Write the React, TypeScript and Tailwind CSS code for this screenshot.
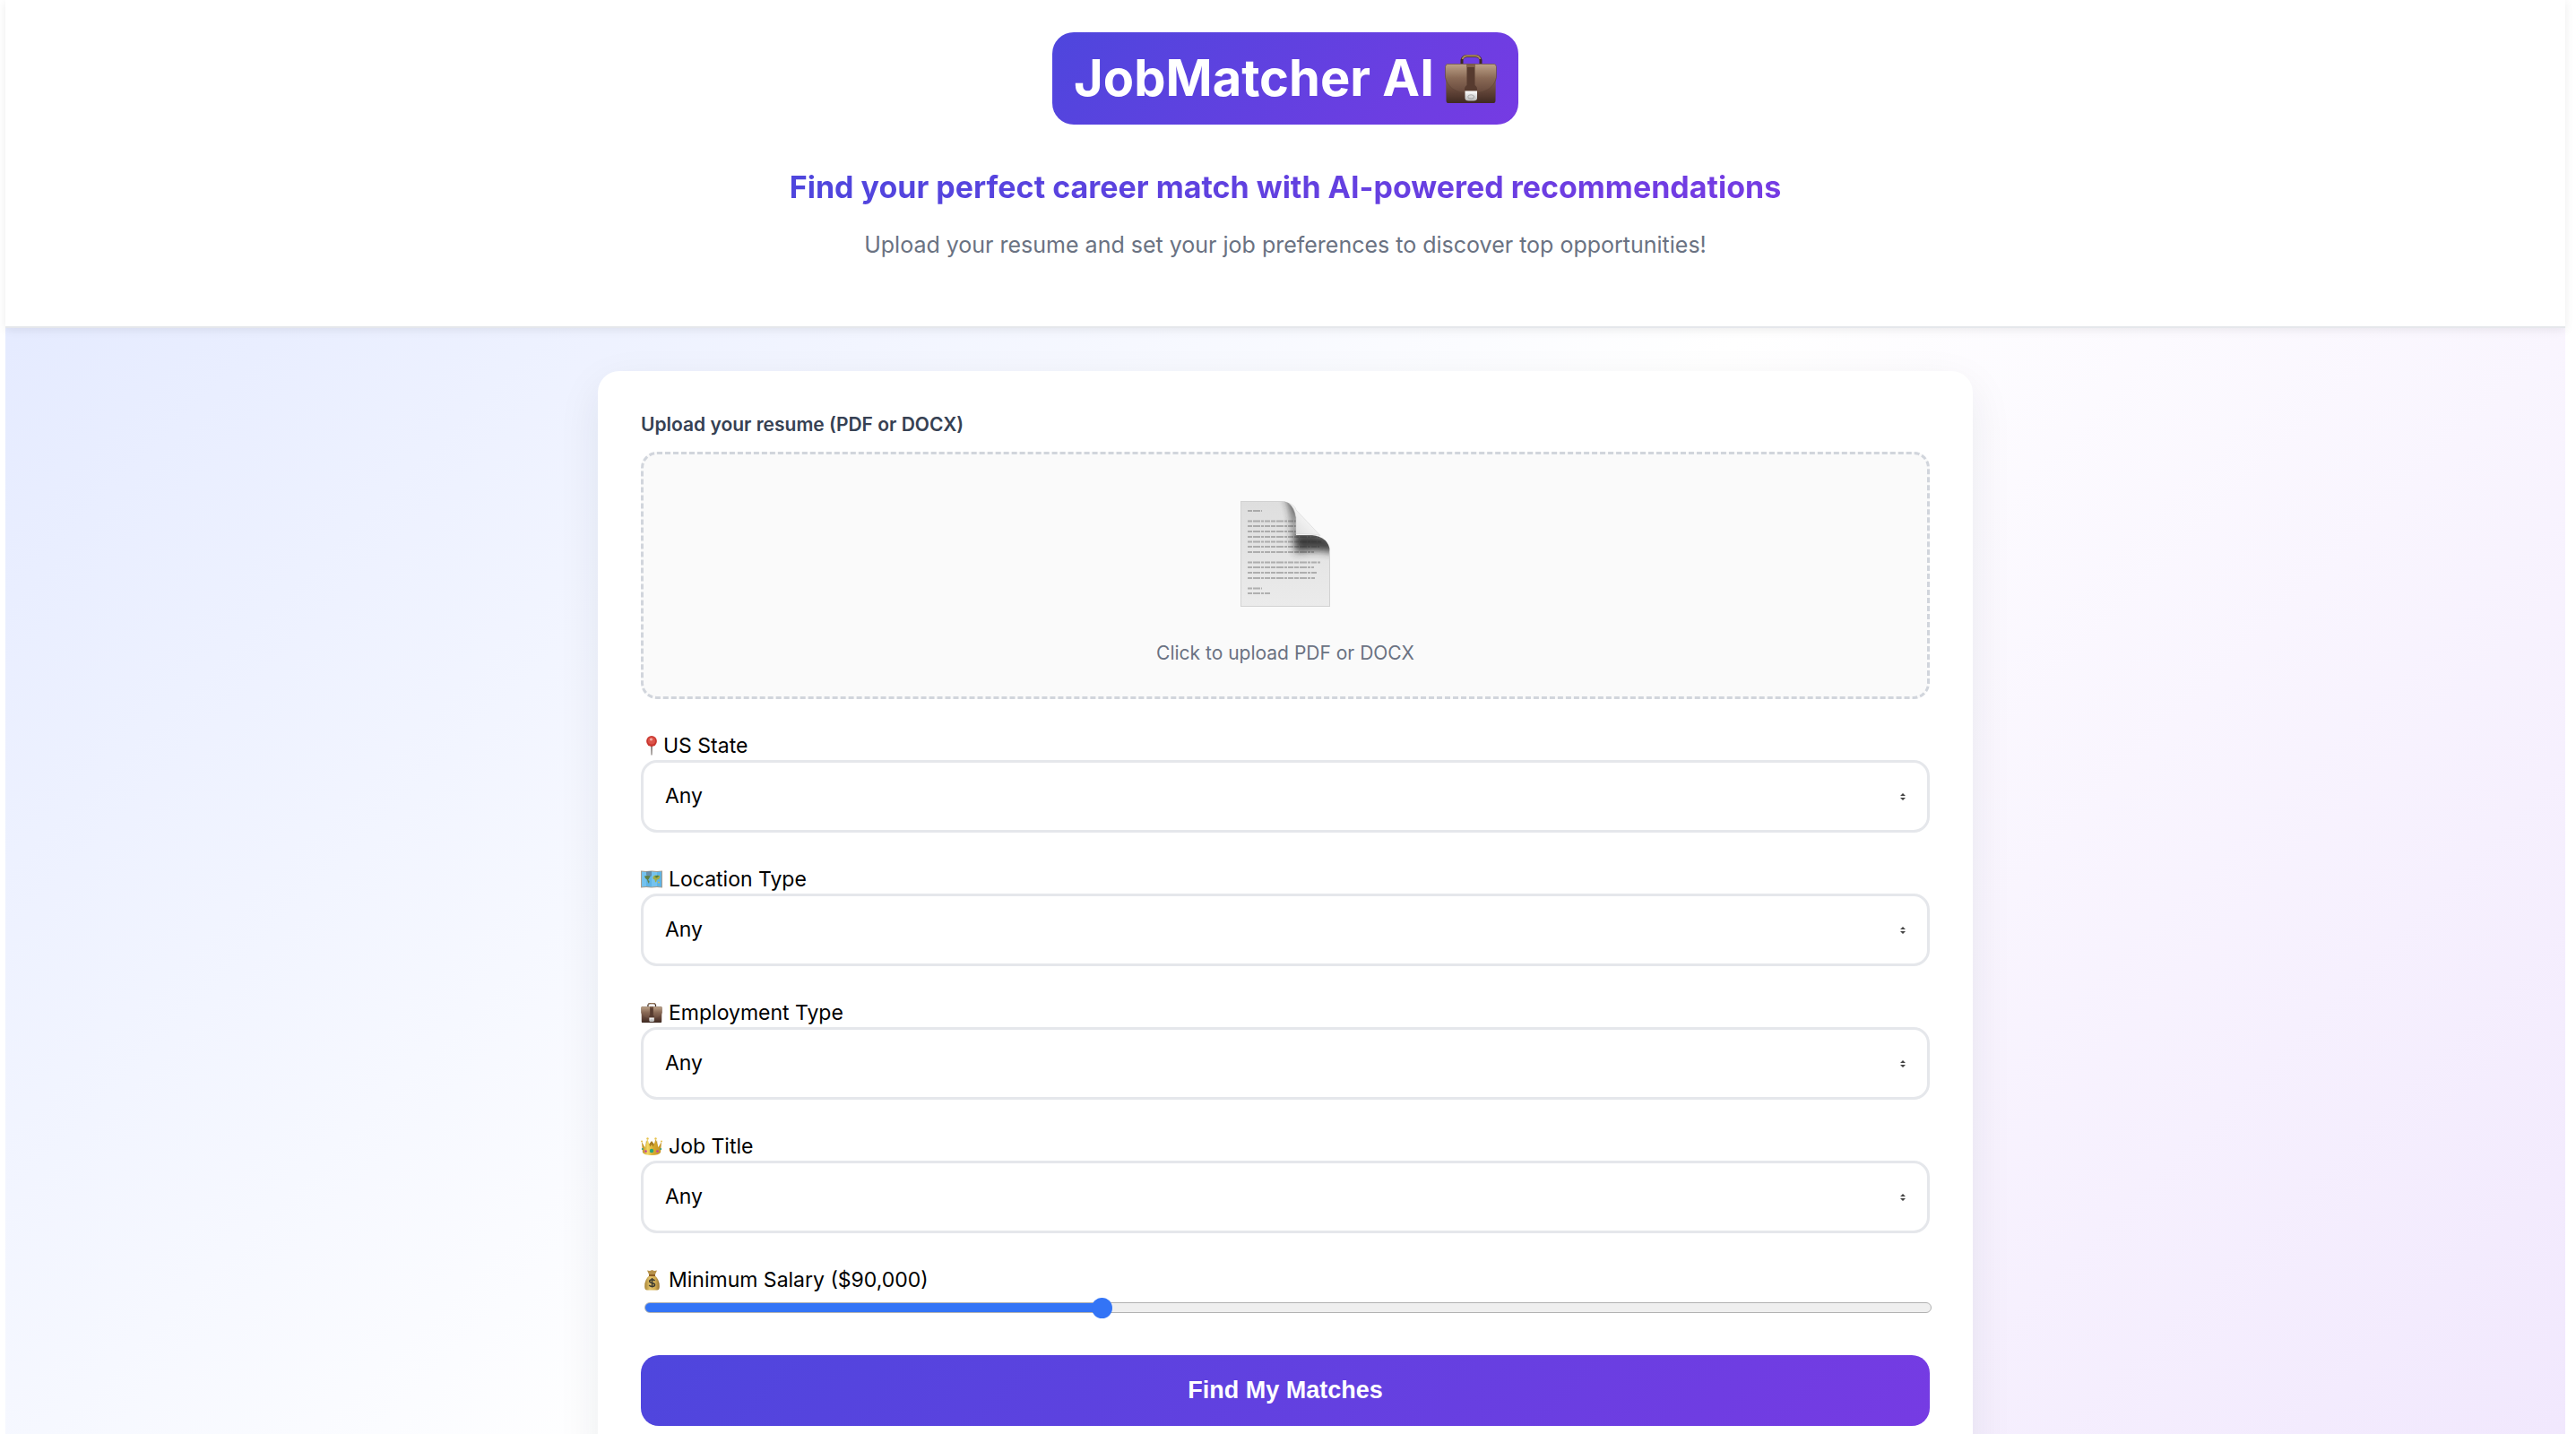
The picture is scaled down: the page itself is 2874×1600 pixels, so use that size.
import { useState, type ReactNode } from "react";

function Briefcase({ className, id }: { className: string; id: string }) {
  return (
    <svg viewBox="0 0 58 54" className={className} aria-hidden="true">
      <defs>
        <linearGradient id={`${id}-body`} x1="0" y1="0" x2="0" y2="1">
          <stop offset="0" stopColor="#b89c82" />
          <stop offset="0.3" stopColor="#8b6c56" />
          <stop offset="0.65" stopColor="#67483b" />
          <stop offset="1" stopColor="#3f2a22" />
        </linearGradient>
        <linearGradient id={`${id}-flap`} x1="0" y1="0" x2="0" y2="1">
          <stop offset="0" stopColor="#bda288" />
          <stop offset="0.5" stopColor="#896955" />
          <stop offset="1" stopColor="#684a3d" />
        </linearGradient>
        <linearGradient id={`${id}-lock`} x1="0" y1="0" x2="0" y2="1">
          <stop offset="0" stopColor="#ffffff" />
          <stop offset="1" stopColor="#b9b9b9" />
        </linearGradient>
      </defs>
      <path d="M19 10V6Q20 1.500 25 1.500h9Q39 1.500 40 6v4" fill="none" stroke="#3d2a22" strokeWidth="3" />
      <path d="M19.500 5Q21 1.200 25 1.200h9Q38 1.200 39.500 5" fill="none" stroke="#a98662" strokeWidth="2" />
      <path d="M3 10.500h52q2 0 2 2L56.500 51q0 3-2 3h-51q-2 0-2-3L1 12.500q0-2 2-2z" fill={`url(#${id}-body)`} />
      <path d="M3 10.500h52q2 0 2.500 3v12C55 37 45 42 36 42H22C13 42 3 37 .500 25.500v-12q.500-3 2.500-3z" fill={`url(#${id}-flap)`} stroke="#5d4336" strokeWidth=".6" />
      <path d="M24.500 10.500h9V34q3 2 2.500 6H22q-.500-4 2.500-6z" fill="#573b2f" />
      <path d="M24.500 10.500h9V14h-9z" fill="#80604b" />
      <path d="M22.500 40.500h13.500v8q0 3-4 3h-5.500q-4 0-4-3z" fill={`url(#${id}-lock)`} />
      <ellipse cx="29.200" cy="47" rx="3.500" ry="2.200" fill="none" stroke="#999" strokeWidth=".8" />
    </svg>
  );
}

function Page() {
  const lines = [
    [11, 24],
    [22.5, 66],
    [28, 64],
    [34, 62],
    [40, 88],
    [45.5, 90],
    [51, 88],
    [57, 82],
    [68.5, 89],
    [74, 82],
    [80, 86],
    [86, 83],
    [97.5, 24],
    [103, 34],
  ];
  return (
    <svg viewBox="0 0 100 118" className="h-[118px] w-[100px]" aria-hidden="true">
      <defs>
        <linearGradient id="page-body" x1="0" y1="0" x2="0" y2="1">
          <stop offset="0" stopColor="#dedede" />
          <stop offset="1" stopColor="#ebebeb" />
        </linearGradient>
        <linearGradient id="page-curl" x1="0" y1="1" x2="0.5" y2="0.5">
          <stop offset="0" stopColor="#dadada" />
          <stop offset="1" stopColor="#f1f1f1" />
        </linearGradient>
        <filter id="page-blur" x="-50%" y="-50%" width="200%" height="200%">
          <feGaussianBlur stdDeviation="5" />
        </filter>
        <clipPath id="page-clip">
          <path d="M0 0h46Q60 1 62 18v20h18Q98 40 100 56v62H0z" />
        </clipPath>
      </defs>
      <g clipPath="url(#page-clip)">
        <path d="M0 0h100v118H0z" fill="url(#page-body)" />
        <g stroke="#777" strokeWidth="1.8" strokeDasharray="5 1 8 1 3 1 6 1" opacity=".5">
          {lines.map(([y, end]) => (
            <path key={y} d={`M8 ${y}H${end}`} />
          ))}
        </g>
        <path d="M50-6Q59 8 59 38l3 20q18-6 44 0V46Q94 34 62 35L66-6z" fill="#2b2b2b" opacity=".9" filter="url(#page-blur)" />
        <path d="M0 0h100v118H0z" fill="none" stroke="#d2d2d2" strokeWidth="2" />
      </g>
      <path d="M54 2.500Q61 5 62 10L89 38.500Q84 36.500 62 37V18Q60 7 54 2.500z" fill="url(#page-curl)" stroke="#cfcfcf" strokeWidth=".5" />
    </svg>
  );
}

function Pin() {
  return (
    <svg viewBox="0 0 12 22" className="ml-1.5 mr-[7px] h-[22px] w-3" aria-hidden="true">
      <path d="M5 11h2l-.4 10.500h-1.200z" fill="#8d8582" />
      <circle cx="6" cy="6" r="5.900" fill="#c9372f" />
      <circle cx="6" cy="5.500" r="4" fill="#dc5349" />
      <circle cx="5.500" cy="4" r="1.600" fill="#f4aaa3" />
    </svg>
  );
}

function WorldMap() {
  return (
    <svg viewBox="0 0 24 20" className="mr-[7px] h-5 w-6" aria-hidden="true">
      <path d="M0 .5 6 1l6-.5L18 1l6-.5V19.500l-6-.5-6 .5L6 19l-6 .5z" fill="#a99c8c" />
      <path d="M1 1.500 6 2l6-.5L18 2l5-.5v17l-5-.5-6 .5L6 18l-5 .5z" fill="#74c2ee" />
      <path d="M6 2l6-.5v17L6 18zM18 2l5-.5v17l-5-.5z" fill="#4aa5de" opacity=".5" />
      <path d="M6 1.500 12 1v5L9 8 6 5z" fill="#66839a" opacity=".8" />
      <path d="M4 6.500 7 6l3.500.5L9 9.500 8 11l1.500 1-.5 3-1.200-2-.8-2.500-2-1.500z" fill="#5f7f45" />
      <path d="M13.500 7 16 5.500l5 .5.500 1.500L20 10l-2 .5-1 3-1-.5-.5-2.500-2-1z" fill="#a5ac45" />
      <path d="M19.500 12.500l1.500.5-.5 1.500-1.500-.5z" fill="#d6bd3e" />
      <path d="M15 7l3.500-1.200 2 .8-3 1.800z" fill="#4f7c3d" />
    </svg>
  );
}

function Crown() {
  return (
    <svg viewBox="0 0 24 20" className="mr-[7px] h-5 w-6" aria-hidden="true">
      <defs>
        <linearGradient id="crown-gold" x1="0" y1="0" x2="1" y2="0">
          <stop offset="0" stopColor="#b98a1e" />
          <stop offset="0.3" stopColor="#f2d762" />
          <stop offset="0.6" stopColor="#d7a92e" />
          <stop offset="1" stopColor="#c39426" />
        </linearGradient>
      </defs>
      <path d="M6 3l2 6 4-5 4 5 2-6 1 12H5z" fill="#a67b22" />
      <path d="M1 5l3.500 6L7.500 2l2.700 8.500L12 8l1.800 2.500L16.500 2l3 9L23 5l-1 12q-2 3-10 3T2 17z" fill="url(#crown-gold)" />
      <g fill="#e6c14c">
        <circle cx="1" cy="4.500" r="1" />
        <circle cx="7.500" cy="1.500" r="1.200" />
        <circle cx="16.500" cy="1.500" r="1.200" />
        <circle cx="23" cy="4.500" r="1" />
      </g>
      <circle cx="12" cy="15" r="2.200" fill="#26a67c" />
      <circle cx="5.500" cy="15.500" r="1.300" fill="#c13fa5" />
      <circle cx="18.500" cy="15.500" r="1.300" fill="#c13fa5" />
      <circle cx="1.800" cy="13" r="1" fill="#35a187" />
      <circle cx="22.200" cy="13" r="1" fill="#35a187" />
    </svg>
  );
}

function MoneyBag() {
  return (
    <svg viewBox="0 0 17 24" className="ml-1 mr-2.5 h-6 w-[17px]" aria-hidden="true">
      <defs>
        <linearGradient id="bag-cloth" x1="0" y1="0" x2="1" y2="0">
          <stop offset="0" stopColor="#a88335" />
          <stop offset="0.35" stopColor="#e3c46d" />
          <stop offset="0.7" stopColor="#d3ae54" />
          <stop offset="1" stopColor="#977331" />
        </linearGradient>
      </defs>
      <path d="M3 1.500 6 2l2.500-1L11 2l3-.5L11.500 7h-6z" fill="#b7924a" />
      <path d="M5.500 7h6Q17 11.500 16.800 19.500q0 4-2.800 4H3q-2.800 0-2.800-4Q0 11.500 5.500 7z" fill="url(#bag-cloth)" />
      <path d="M5 7h7" stroke="#86561f" strokeWidth="1.800" />
      <path d="M11.500 13Q10.500 11.800 8.500 11.800q-2.800 0-2.800 1.900c0 2.400 5.800 1 5.800 3.700 0 2.800-5 2.500-6.200.4M8.500 10v10.500" fill="none" stroke="#3b3a32" strokeWidth="1.500" />
    </svg>
  );
}

function SelectField({ id, label, icon, options }: { id: string; label: string; icon: ReactNode; options: string[] }) {
  return (
    <div className="mt-10">
      <label htmlFor={id} className="mb-1 flex h-6 items-center text-[23px] leading-6 text-black">
        {icon}
        {label}
      </label>
      <div className="relative">
        <select
          id={id}
          className="block h-[81px] w-full appearance-none rounded-[18px] border-[3px] border-gray-200 bg-white px-6 text-[23px] text-black"
        >
          {options.map((option) => (
            <option key={option}>{option}</option>
          ))}
        </select>
        <svg viewBox="0 0 6 8" className="pointer-events-none absolute right-[27px] top-[37px] h-2 w-1.5" aria-hidden="true">
          <path d="M3 0 6 3H0zM0 5h6L3 8z" fill="#444" />
        </svg>
      </div>
    </div>
  );
}

const MIN_SALARY = 30000;
const MAX_SALARY = 200000;

export default function App() {
  const [salary, setSalary] = useState(90000);
  const filled = ((salary - MIN_SALARY) / (MAX_SALARY - MIN_SALARY)) * 100;

  return (
    <div className="h-screen overflow-hidden bg-white pl-1.5 pr-3 font-['Inter',sans-serif]">
      <div className="min-h-full bg-[linear-gradient(135deg,#e0e7ff_0%,#ffffff_50%,#f0e6fd_100%)]">
        <header className="flex flex-col items-center border-b-2 border-gray-200 bg-white pb-[71px] pt-9 shadow-[0_2px_10px_rgba(0,0,0,0.08)]">
          <h1 className="flex items-center gap-3 rounded-3xl bg-[linear-gradient(135deg,#4e46dd,#763be3)] px-6 py-4 text-[56px] font-bold leading-[71px] text-white">
            JobMatcher AI
            <Briefcase id="brand" className="h-[54px] w-[58px]" />
          </h1>
          <h2 className="mt-12 bg-[linear-gradient(135deg,#4e46dd,#763be3)] bg-clip-text text-[34px] font-bold leading-[44px] text-transparent">
            Find your perfect career match with AI-powered recommendations
          </h2>
          <p className="mt-[22px] text-[25px] leading-10 text-gray-500">
            Upload your resume and set your job preferences to discover top opportunities!
          </p>
        </header>
        <main className="pb-32 pt-12">
          <form
            onSubmit={(event) => event.preventDefault()}
            className="mx-auto max-w-[1534px] rounded-3xl bg-white p-12 shadow-[0_16px_48px_rgba(31,41,55,0.08)]"
          >
            <label htmlFor="resume" className="block">
              <span className="block text-[21px] font-semibold leading-6 text-gray-700">Upload your resume (PDF or DOCX)</span>
              <span className="mt-[18px] flex h-[276px] flex-col items-center rounded-[18px] border-[3px] border-dashed border-gray-300 bg-[#fafafa] pt-[52px]">
                <Page />
                <span className="mt-[38px] text-[21px] leading-7 text-gray-500">Click to upload PDF or DOCX</span>
              </span>
            </label>
            <input id="resume" type="file" accept=".pdf,.docx" className="sr-only" />
            <SelectField id="state" label="US State" icon={<Pin />} options={["Any", "California", "New York", "Texas"]} />
            <SelectField id="location" label="Location Type" icon={<WorldMap />} options={["Any", "Remote", "Hybrid", "On-site"]} />
            <SelectField
              id="employment"
              label="Employment Type"
              icon={<Briefcase id="employment-icon" className="mr-[7px] h-[22px] w-6" />}
              options={["Any", "Full-time", "Part-time", "Contract"]}
            />
            <SelectField id="title" label="Job Title" icon={<Crown />} options={["Any", "Engineer", "Designer", "Manager"]} />
            <div className="mt-10">
              <label htmlFor="salary" className="mb-[7px] flex h-6 items-center text-[23px] leading-6 text-black">
                <MoneyBag />
                Minimum Salary (${salary.toLocaleString("en-US")})
              </label>
              <div className="-mr-0.5 ml-1 flex h-6 items-center">
                <input
                  id="salary"
                  type="range"
                  min={MIN_SALARY}
                  max={MAX_SALARY}
                  step={5000}
                  value={salary}
                  onChange={(event) => setSalary(Number(event.target.value))}
                  style={{ backgroundImage: `linear-gradient(to right, #3374f6 ${filled}%, #efefef ${filled}%)` }}
                  className="h-3 w-full appearance-none rounded-full border border-[#b2b2b2] [&::-webkit-slider-thumb]:size-[23px] [&::-webkit-slider-thumb]:appearance-none [&::-webkit-slider-thumb]:rounded-full [&::-webkit-slider-thumb]:bg-[#3374f6]"
                />
              </div>
            </div>
            <button
              type="submit"
              className="mt-[41px] block h-[79px] w-full rounded-[20px] bg-[linear-gradient(135deg,#4e46dd,#763be3)] font-['Liberation_Sans',sans-serif] text-[27px] font-bold text-white"
            >
              Find My Matches
            </button>
          </form>
        </main>
      </div>
    </div>
  );
}
